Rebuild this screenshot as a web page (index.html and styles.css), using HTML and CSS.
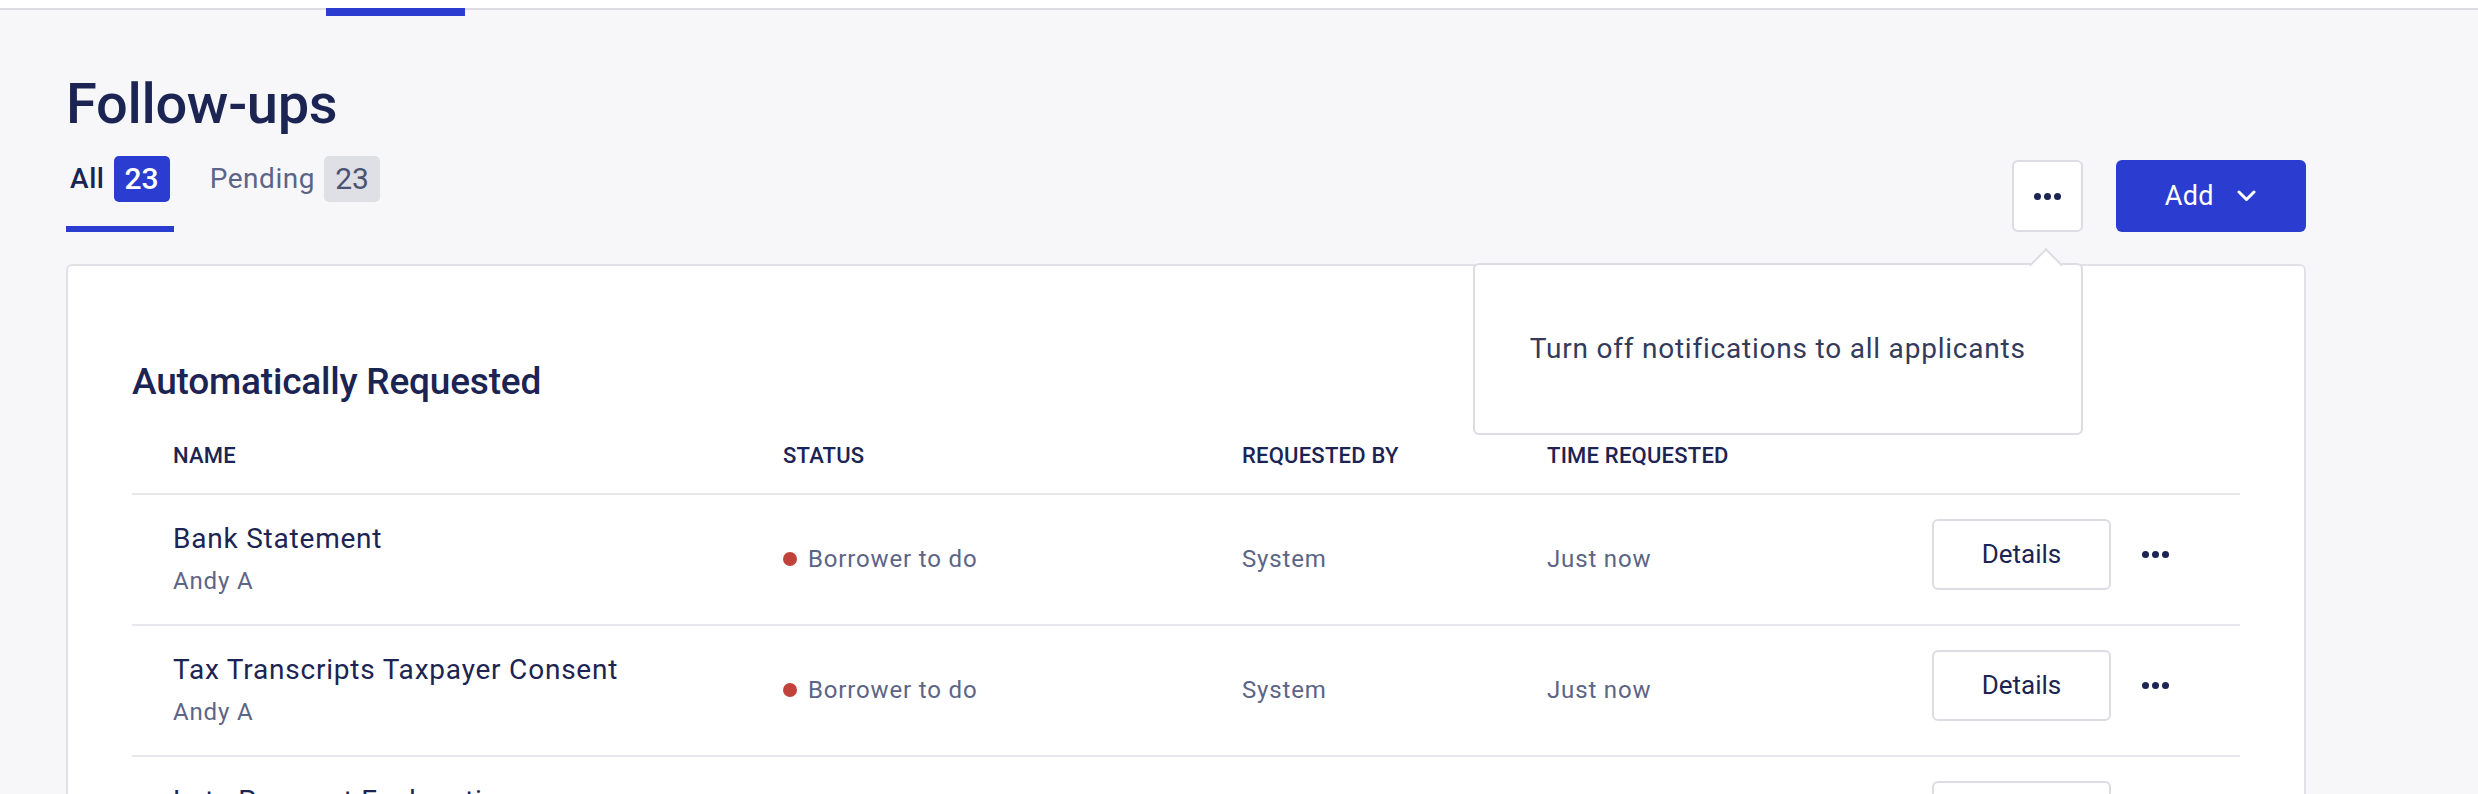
FILE: index.html
```html
<!DOCTYPE html>
<html lang="en">
<head>
<meta charset="utf-8">
<title>Follow-ups</title>
<link rel="stylesheet" href="styles.css">
</head>
<body>
<header class="topbar"></header>
<div class="navline"><span class="nav-active"></span></div>
<main class="page">
  <h1 class="title">Follow-ups</h1>
  <div class="toolbar">
    <nav class="tabs">
      <a class="tab tab--active">All <span class="badge badge--active">23</span></a>
      <a class="tab">Pending <span class="badge">23</span></a>
    </nav>
    <div class="actions">
      <div class="menu-wrap">
        <button class="icon-btn" aria-label="More">
          <svg class="dots" width="27" height="7" viewBox="0 0 27 7"><circle cx="3.5" cy="3.5" r="3.5"/><circle cx="13.5" cy="3.5" r="3.5"/><circle cx="23.5" cy="3.5" r="3.5"/></svg>
        </button>
        <div class="popover">Turn off notifications to all applicants</div>
      </div>
      <button class="btn-primary">Add
        <svg class="chevron" width="19" height="12" viewBox="0 0 19 12"><polyline points="2,2 9.5,9.5 17,2"/></svg>
      </button>
    </div>
  </div>
  <section class="card">
    <h2 class="card-title">Automatically Requested</h2>
    <div class="table">
      <div class="row row--head">
        <div>Name</div><div>Status</div><div>Requested by</div><div>Time requested</div><div></div>
      </div>
      <div class="row">
        <div><div class="name">Bank Statement</div><div class="sub">Andy A</div></div>
        <div class="cell-muted status"><span class="dot"></span>Borrower to do</div>
        <div class="cell-muted">System</div>
        <div class="cell-muted">Just now</div>
        <div class="row-actions">
          <button class="btn-outline">Details</button>
          <button class="dots-btn" aria-label="More"><svg class="dots" width="27" height="7" viewBox="0 0 27 7"><circle cx="3.5" cy="3.5" r="3.5"/><circle cx="13.5" cy="3.5" r="3.5"/><circle cx="23.5" cy="3.5" r="3.5"/></svg></button>
        </div>
      </div>
      <div class="row">
        <div><div class="name">Tax Transcripts Taxpayer Consent</div><div class="sub">Andy A</div></div>
        <div class="cell-muted status"><span class="dot"></span>Borrower to do</div>
        <div class="cell-muted">System</div>
        <div class="cell-muted">Just now</div>
        <div class="row-actions">
          <button class="btn-outline">Details</button>
          <button class="dots-btn" aria-label="More"><svg class="dots" width="27" height="7" viewBox="0 0 27 7"><circle cx="3.5" cy="3.5" r="3.5"/><circle cx="13.5" cy="3.5" r="3.5"/><circle cx="23.5" cy="3.5" r="3.5"/></svg></button>
        </div>
      </div>
      <div class="row">
        <div><div class="name">Late Payment Explanation</div><div class="sub">Andy A</div></div>
        <div class="cell-muted status"><span class="dot"></span>Borrower to do</div>
        <div class="cell-muted">System</div>
        <div class="cell-muted">Just now</div>
        <div class="row-actions">
          <button class="btn-outline">Details</button>
          <button class="dots-btn" aria-label="More"><svg class="dots" width="27" height="7" viewBox="0 0 27 7"><circle cx="3.5" cy="3.5" r="3.5"/><circle cx="13.5" cy="3.5" r="3.5"/><circle cx="23.5" cy="3.5" r="3.5"/></svg></button>
        </div>
      </div>
    </div>
  </section>
</main>
</body>
</html>
```
FILE: styles.css
```css
* { box-sizing: border-box; }

body {
  margin: 0;
  background: #f7f7f9;
  font-family: Roboto, "Noto Sans", "Liberation Sans", sans-serif;
  color: #1b2452;
  letter-spacing: 0.025em;
}

button {
  font: inherit;
  letter-spacing: inherit;
  cursor: pointer;
}

.topbar {
  height: 8px;
  background: #ffffff;
}

.navline {
  height: 2px;
  background: #dcdce3;
  padding-left: 326px;
}

.nav-active {
  display: block;
  width: 139px;
  height: 8px;
  background: #2b3cd1;
}

.page {
  padding: 0 172px 40px 66px;
}

.title {
  margin: 62px 0 0;
  font-size: 56px;
  line-height: 64px;
  font-weight: 500;
  letter-spacing: -0.3px;
}

.toolbar {
  display: flex;
  justify-content: space-between;
  align-items: flex-end;
  margin-top: 20px;
}

.tabs {
  display: flex;
  gap: 32px;
}

.tab {
  display: flex;
  align-items: center;
  gap: 9px;
  padding: 0 4px 24px;
  border-bottom: 6px solid transparent;
  font-size: 28px;
  line-height: 46px;
  color: #5c6585;
  text-decoration: none;
  letter-spacing: 0.02em;
}

.tab--active {
  border-bottom-color: #2b3cd1;
  color: #1b2452;
  font-weight: 500;
}

.badge {
  display: inline-block;
  padding: 0 11px;
  border-radius: 5px;
  background: #dfe0e5;
  color: #4b5272;
  font-size: 30px;
  line-height: 46px;
  font-weight: 400;
  letter-spacing: 0;
}

.badge--active {
  background: #2b3cd1;
  color: #ffffff;
  font-weight: 500;
}

.actions {
  display: flex;
  align-items: center;
  gap: 33px;
}

.menu-wrap {
  position: relative;
  display: flex;
}

.icon-btn {
  display: flex;
  align-items: center;
  justify-content: center;
  width: 71px;
  height: 72px;
  padding: 0;
  background: #ffffff;
  border: 2px solid #dcdce3;
  border-radius: 6px;
}

.dots {
  display: block;
  fill: #1b2452;
}

.btn-primary {
  display: flex;
  align-items: center;
  gap: 23px;
  height: 72px;
  padding: 0 50px 0 49px;
  background: #2b3cd1;
  border: none;
  border-radius: 6px;
  color: #ffffff;
  font-size: 27px;
}

.chevron {
  display: block;
  fill: none;
  stroke: #ffffff;
  stroke-width: 3;
  stroke-linecap: round;
  stroke-linejoin: round;
}

.popover {
  position: absolute;
  top: calc(100% + 31px);
  right: 0;
  z-index: 10;
  padding: 66px 55px;
  background: #ffffff;
  border: 2px solid #dcdce3;
  border-radius: 6px;
  font-size: 28px;
  line-height: 36px;
  color: #333a5c;
  letter-spacing: 0.028em;
  white-space: nowrap;
}

.popover::before {
  content: "";
  position: absolute;
  top: -12px;
  right: 23px;
  width: 22px;
  height: 22px;
  background: #ffffff;
  border-top: 2px solid #dcdce3;
  border-left: 2px solid #dcdce3;
  transform: rotate(45deg);
}

.card {
  margin-top: 32px;
  padding: 94px 64px 0;
  background: #ffffff;
  border: 2px solid #e1e1e7;
  border-radius: 6px;
}

.card-title {
  margin: 0;
  font-size: 37px;
  line-height: 44px;
  font-weight: 500;
  letter-spacing: -0.2px;
}

.table {
  margin-top: 39px;
}

.row {
  display: grid;
  grid-template-columns: 610px 459px 305px 385px 1fr;
  align-items: center;
  padding: 26px 0 27px 41px;
  border-bottom: 2px solid #e7e7ed;
}

.row--head {
  padding: 0 0 24px 41px;
  font-size: 22px;
  line-height: 26px;
  font-weight: 500;
  text-transform: uppercase;
  letter-spacing: 0.01em;
}

.name {
  font-size: 28px;
  line-height: 36px;
  letter-spacing: 0.028em;
}

.sub {
  margin-top: 8px;
  font-size: 24px;
  line-height: 32px;
  color: #5c6585;
  letter-spacing: 0.035em;
}

.cell-muted {
  font-size: 24px;
  line-height: 32px;
  color: #5c6585;
  letter-spacing: 0.035em;
}

.status {
  display: flex;
  align-items: center;
  gap: 11px;
}

.dot {
  width: 14px;
  height: 14px;
  border-radius: 50%;
  background: #c1413b;
}

.row-actions {
  display: flex;
  align-items: center;
  gap: 31px;
  margin: -5px 0 5px;
}

.btn-outline {
  width: 179px;
  height: 71px;
  padding: 0;
  background: #ffffff;
  border: 2px solid #dcdce3;
  border-radius: 6px;
  font-size: 26px;
  color: #1b2452;
  letter-spacing: 0;
}

.dots-btn {
  display: flex;
  padding: 0;
  background: none;
  border: none;
}
```
